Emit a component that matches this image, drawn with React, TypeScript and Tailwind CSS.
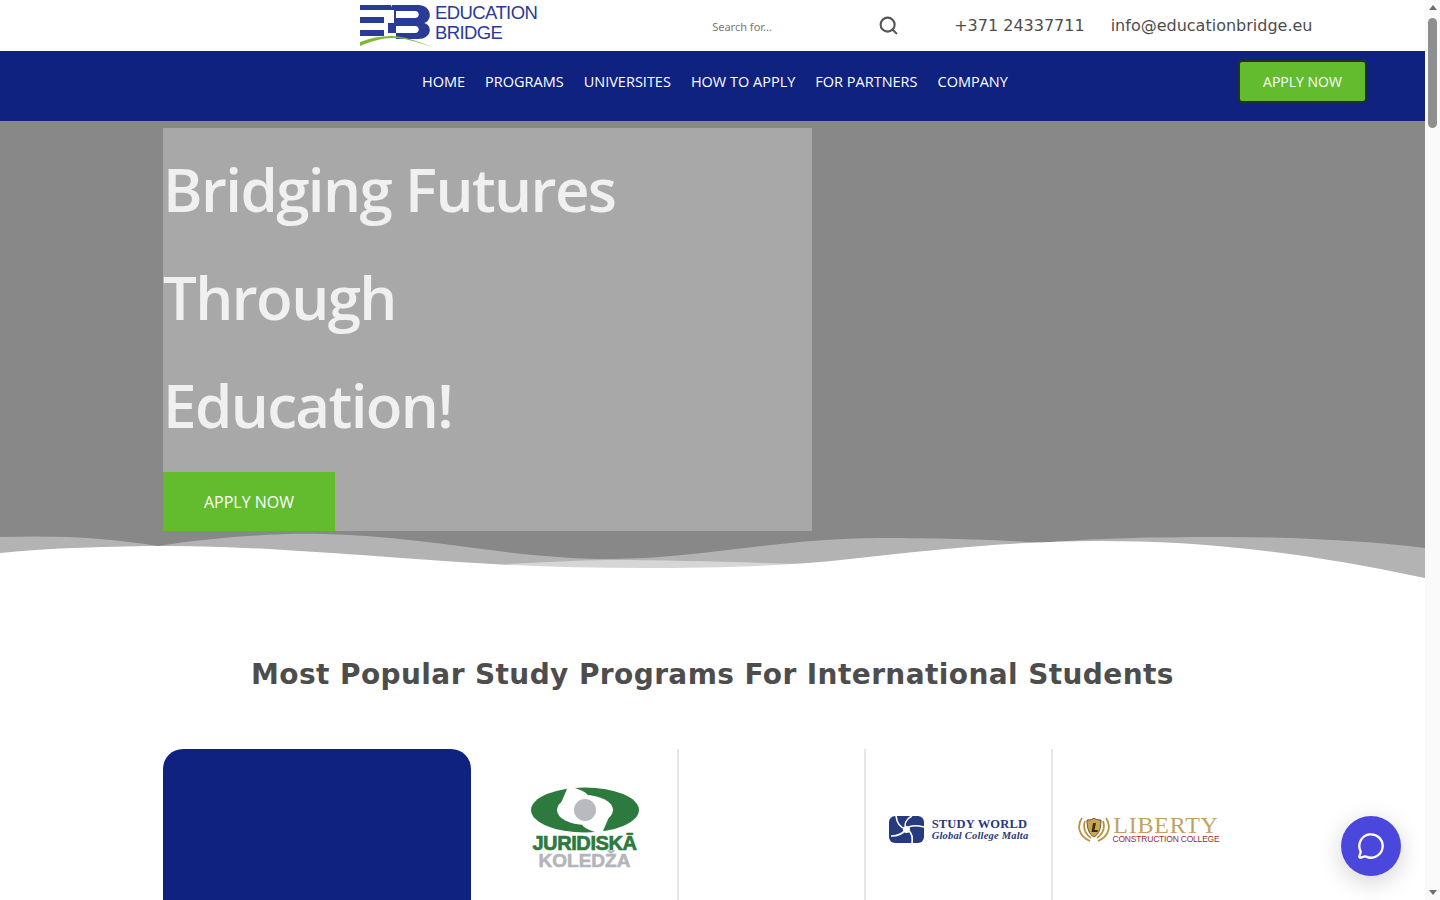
import { MessageCircle, Search } from "lucide-react";

const navLinks = ["HOME", "PROGRAMS", "UNIVERSITES", "HOW TO APPLY", "FOR PARTNERS", "COMPANY"];

function BridgeLogo() {
  return (
    <div className="flex items-start">
      <svg width="75" height="49" viewBox="0 0 75 49" className="shrink-0">
        <path d="M0 5H31V10H0ZM0 17H24V23H0ZM0 30H24V36H0Z" fill="#2a3a97" />
        <path d="M32 5H58C72 5 73 21 64 23C73 25 72 39 58 39H36V33H28V23H34V10H30Z" fill="#2a3a97" />
        <path d="M36 11H55C60 11 60 18 55 18H36ZM36 26H55C60 26 60 33 55 33H36Z" fill="#fff" />
        <path d="M0 42C10 38 20 36 31 36C44 36 58 41 74 48C55 41 44 38 33 38C22 38 12 41 0 46Z" fill="#7fb83d" />
      </svg>
      <div className="ml-0 mt-[3px] font-['Liberation_Sans',sans-serif] text-[18.5px] leading-[20px] tracking-[-0.6px] text-[#2a3a97]">
        <div>EDUCATION</div>
        <div>BRIDGE</div>
      </div>
    </div>
  );
}

function JuridiskaLogo() {
  return (
    <div className="flex w-[112px] flex-col items-center">
      <svg width="108" height="46" viewBox="0 0 108 46">
        <ellipse cx="54" cy="23" rx="54" ry="22.5" fill="#2d7a3e" />
        <ellipse cx="54" cy="23" rx="28" ry="15" fill="#fff" />
        <path d="M40 0C56 4 62 10 52 12L30 16L36 2ZM68 46C52 42 46 36 56 34L78 30L72 44Z" fill="#fff" />
        <circle cx="54" cy="23" r="11" fill="#b9bac0" />
      </svg>
      <div className="mt-[1px] font-['Liberation_Sans',sans-serif] text-[20px] leading-[18px] font-black tracking-[-0.4px] text-[#2d7a3e] [-webkit-text-stroke:0.7px_#2d7a3e]">
        JURIDISKĀ
      </div>
      <div className="font-['Liberation_Sans',sans-serif] text-[19px] leading-[17px] font-black text-[#b4b5ba] [-webkit-text-stroke:0.6px_#b4b5ba]">
        KOLEDŽA
      </div>
    </div>
  );
}

function StudyWorldLogo() {
  return (
    <div className="flex items-center gap-[8px]">
      <svg width="35" height="27" viewBox="0 0 35 27">
        <rect width="35" height="27" rx="6" fill="#27397f" />
        <g stroke="#fff" strokeWidth="1.6" fill="none">
          <path d="M17 13C15 8 17 3 23 0" />
          <path d="M17 13C21 9 27 9 35 11" />
          <path d="M17 13C22 15 24 20 23 27" />
          <path d="M17 13C14 18 9 20 2 20" />
          <path d="M17 13C12 12 8 8 7 0" />
        </g>
        <circle cx="17.5" cy="13.5" r="3.5" fill="#fff" />
      </svg>
      <div className="font-['Liberation_Serif',serif] font-bold text-[#27397f]">
        <div className="text-[12.5px] leading-[12px] tracking-[0.2px]">STUDY WORLD</div>
        <div className="text-[10.5px] leading-[11px] italic tracking-[0.2px]">Global College Malta</div>
      </div>
    </div>
  );
}

function LibertyLogo() {
  return (
    <div className="flex items-center gap-[2px]">
      <svg width="34" height="28" viewBox="0 0 34 28">
        <path d="M5 3C0 10 1 21 13 26M29 3C34 10 33 21 21 26M8 6C6 12 7 18 14 23M26 6C28 12 27 18 20 23" stroke="#b9933f" strokeWidth="1.8" fill="none" />
        <path d="M10 5C14 5 16 4 17 3C18 4 20 5 24 5C24 14 22 19 17 22C12 19 10 14 10 5Z" fill="#c9a650" stroke="#4a3a1c" strokeWidth="0.8" />
        <path d="M16 8H19L17.5 15H21L20.5 17H14.5Z" fill="#3c2f15" />
      </svg>
      <div className="flex flex-col items-center">
        <div className="font-['Liberation_Serif',serif] text-[24px] leading-[20px] tracking-[0.8px] text-[#c2a263]">LIBERTY</div>
        <div className="font-['Liberation_Sans',sans-serif] text-[8.5px] leading-[8px] tracking-[-0.2px] text-[#9c2a35]">CONSTRUCTION COLLEGE</div>
      </div>
    </div>
  );
}

function HeroWaves() {
  return (
    <svg className="absolute bottom-0 left-0" width="1425" height="70" viewBox="0 510 1425 70" preserveAspectRatio="none">
      <path d="M0 536C60 534 110 537 158 545C210 537 270 532 321 533C420 534 510 558 610 558C700 558 780 537 880 537C950 537 1000 539 1041 542C1080 538 1140 536 1225 536C1300 536 1370 540 1425 547V580H0Z" fill="#b3b3b3" />
      <path d="M505 563C540 562 575 559 610 559C670 559 730 561 800 563L720 570H560Z" fill="#d6d6d6" />
      <path d="M0 552C50 547 110 545 170 545C250 545 340 553 459 561C520 565 580 567 643 567C720 567 790 565 850 558C930 549 1010 540 1100 540C1190 540 1290 548 1425 577V580H0Z" fill="#fff" />
    </svg>
  );
}

export default function App() {
  return (
    <div className="relative flex h-[900px] overflow-hidden bg-white font-['Open_Sans',sans-serif]">
      <div className="w-[1425px] shrink-0">
        <header className="flex h-[51px] items-start bg-white pl-[360px]">
          <BridgeLogo />
          <div className="ml-[175px] flex h-[51px] w-[187px] items-center justify-between">
            <span className="mt-[3px] font-['Noto_Sans',sans-serif] text-[11px] text-[#777]">Search for...</span>
            <Search size={21} strokeWidth={2.4} className="text-[#555]" />
          </div>
          <div className="ml-[55px] flex h-[51px] items-center gap-[26px] font-['DejaVu_Sans',sans-serif] text-[16px] text-[#4d4d4d]">
            <span>+371 24337711</span>
            <span>info@educationbridge.eu</span>
          </div>
        </header>

        <nav className="flex h-[70px] items-start bg-[#0f2280] pl-[422px]">
          <ul className="mt-[21px] flex gap-[20px] text-[14.5px] leading-[20px] text-white">
            {navLinks.map((link) => (
              <li key={link}>{link}</li>
            ))}
          </ul>
          <button className="absolute top-[60px] left-[1238px] h-[43px] w-[129px] rounded-[4px] border-2 border-[#1f2f35] bg-[#62bc2d] text-[14px] text-white">
            APPLY NOW
          </button>
        </nav>

        <section className="relative h-[460px] bg-[#888888] pt-[7px] pl-[163px]">
          <div className="h-[403px] w-[649px] bg-[#a8a8a8]">
            <h1 className="pt-[7px] text-[60px] leading-[108px] font-semibold tracking-[-1.6px] text-[#f0f0f0]">
              Bridging Futures
              <br />
              Through
              <br />
              Education!
            </h1>
            <button className="mt-[13px] h-[59px] w-[172px] bg-[#62bc2d] text-[16px] text-white">APPLY NOW</button>
          </div>
          <HeroWaves />
        </section>

        <h2 className="mt-[76px] text-center font-['DejaVu_Sans',sans-serif] text-[28px] leading-[36px] font-bold tracking-[0.4px] text-[#4d4d4d]">
          Most Popular Study Programs For International Students
        </h2>

        <div className="mt-[56px] flex items-start pl-[163px]">
          <div className="h-[300px] w-[308px] rounded-[20px] bg-[#0f2280]" />
          <div className="ml-[21px] flex h-[160px] w-[187px] items-center justify-center border-r-2 border-[#e6e6e6] pb-[2px]">
            <JuridiskaLogo />
          </div>
          <div className="h-[160px] w-[187px] border-r-2 border-[#e6e6e6]" />
          <div className="flex h-[160px] w-[187px] items-center justify-center border-r-2 border-[#e6e6e6]">
            <StudyWorldLogo />
          </div>
          <div className="flex h-[160px] w-[190px] items-center justify-center">
            <LibertyLogo />
          </div>
        </div>
      </div>

      <div className="relative flex w-[15px] shrink-0 flex-col items-center bg-[#fafafa]">
        <div className="mt-[5px] h-0 w-0 border-x-[4px] border-b-[5px] border-x-transparent border-b-[#6e6e6e]" />
        <div className="mt-[8px] h-[110px] w-[9px] rounded-[5px] bg-[#8f8f8f]" />
        <div className="absolute bottom-[5px] h-0 w-0 border-x-[4px] border-t-[5px] border-x-transparent border-t-[#6e6e6e]" />
      </div>

      <button className="absolute top-[816px] left-[1341px] flex h-[60px] w-[60px] items-center justify-center rounded-full bg-[#4c47dc] text-white shadow-[0_6px_24px_rgba(0,0,0,0.18)]">
        <MessageCircle size={28} strokeWidth={2} />
      </button>
    </div>
  );
}
